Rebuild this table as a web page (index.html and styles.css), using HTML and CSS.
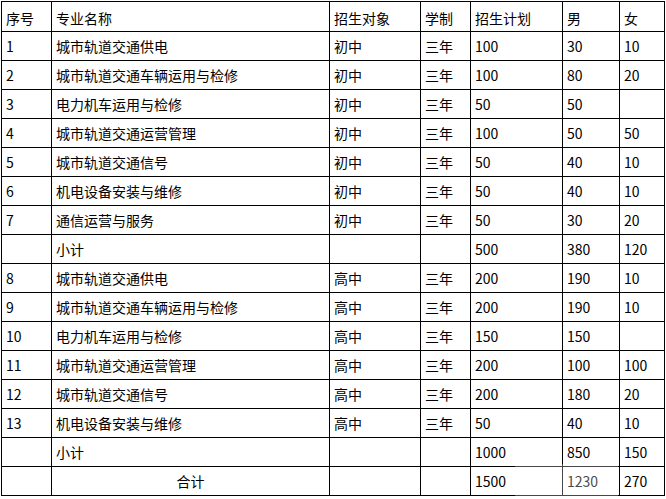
FILE: index.html
```html
<!DOCTYPE html>
<html lang="zh-CN">
<head>
<meta charset="utf-8">
<title>招生计划</title>
<link rel="stylesheet" href="styles.css">
</head>
<body>
<div class="wrap">
<table class="plan">
  <thead>
    <tr>
      <th class="w-no">序号</th>
      <th class="w-name">专业名称</th>
      <th class="w-target">招生对象</th>
      <th class="w-years">学制</th>
      <th class="w-plan">招生计划</th>
      <th class="w-m">男</th>
      <th class="w-f">女</th>
    </tr>
  </thead>
  <tbody>
    <tr><td>1</td><td>城市轨道交通供电</td><td>初中</td><td>三年</td><td>100</td><td>30</td><td>10</td></tr>
    <tr><td>2</td><td>城市轨道交通车辆运用与检修</td><td>初中</td><td>三年</td><td>100</td><td>80</td><td>20</td></tr>
    <tr><td>3</td><td>电力机车运用与检修</td><td>初中</td><td>三年</td><td>50</td><td>50</td><td></td></tr>
    <tr><td>4</td><td>城市轨道交通运营管理</td><td>初中</td><td>三年</td><td>100</td><td>50</td><td>50</td></tr>
    <tr><td>5</td><td>城市轨道交通信号</td><td>初中</td><td>三年</td><td>50</td><td>40</td><td>10</td></tr>
    <tr><td>6</td><td>机电设备安装与维修</td><td>初中</td><td>三年</td><td>50</td><td>40</td><td>10</td></tr>
    <tr><td>7</td><td>通信运营与服务</td><td>初中</td><td>三年</td><td>50</td><td>30</td><td>20</td></tr>
    <tr><td></td><td>小计</td><td></td><td></td><td>500</td><td>380</td><td>120</td></tr>
    <tr><td>8</td><td>城市轨道交通供电</td><td>高中</td><td>三年</td><td>200</td><td>190</td><td>10</td></tr>
    <tr><td>9</td><td>城市轨道交通车辆运用与检修</td><td>高中</td><td>三年</td><td>200</td><td>190</td><td>10</td></tr>
    <tr><td>10</td><td>电力机车运用与检修</td><td>高中</td><td>三年</td><td>150</td><td>150</td><td></td></tr>
    <tr><td>11</td><td>城市轨道交通运营管理</td><td>高中</td><td>三年</td><td>200</td><td>100</td><td>100</td></tr>
    <tr><td>12</td><td>城市轨道交通信号</td><td>高中</td><td>三年</td><td>200</td><td>180</td><td>20</td></tr>
    <tr><td>13</td><td>机电设备安装与维修</td><td>高中</td><td>三年</td><td>50</td><td>40</td><td>10</td></tr>
    <tr><td></td><td>小计</td><td></td><td></td><td>1000</td><td>850</td><td>150</td></tr>
    <tr><td></td><td class="center">合计</td><td></td><td></td><td>1500</td><td>1230</td><td>270</td></tr>
  </tbody>
</table>
<div class="fade"></div>
</div>
</body>
</html>
```

FILE: styles.css
```css
html, body {
  margin: 0;
  padding: 0;
  background: #fff;
}
body {
  font-family: "Noto Sans CJK SC", "Noto Sans", sans-serif;
  font-size: 14px;
  color: #000;
}
.wrap {
  position: relative;
  padding: 1px 0 0 1px;
}
.plan {
  table-layout: fixed;
  border-collapse: separate;
  border-spacing: 0;
  border-left: 1px solid #000;
  border-top: 1px solid #000;
  width: 664px;
}
.plan th,
.plan td {
  box-sizing: border-box;
  border-right: 1px solid #000;
  border-bottom: 1px solid #000;
  padding: 0 0 0 4px;
  text-align: left;
  font-weight: normal;
  vertical-align: middle;
  line-height: 20px;
  white-space: nowrap;
  overflow: hidden;
}
.plan th {
  height: 30px;
  padding-top: 2px;
}
.plan td {
  height: 29px;
}
.plan .center {
  text-align: center;
  padding-left: 0;
}
.w-no { width: 50px; }
.w-name { width: 278px; }
.w-target { width: 91px; }
.w-years { width: 50px; }
.w-plan { width: 92px; }
.w-m { width: 57px; }
.w-f { width: 45px; }
.fade {
  position: absolute;
  left: 515px;
  top: 464px;
  width: 103px;
  height: 35px;
  background: rgba(255, 255, 255, 0.28);
}
```
